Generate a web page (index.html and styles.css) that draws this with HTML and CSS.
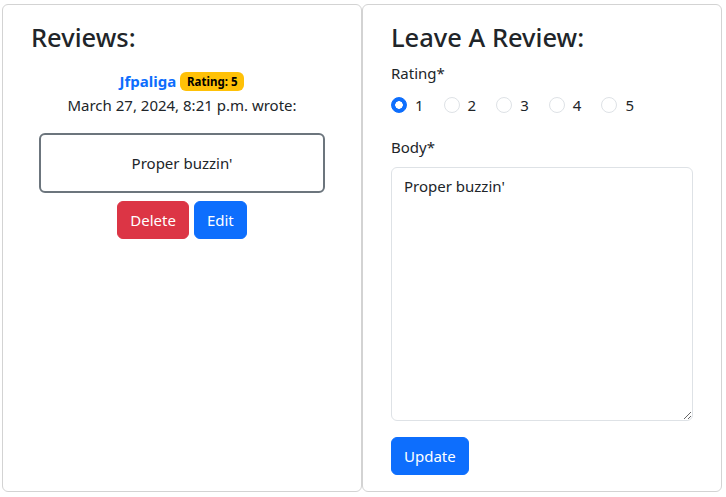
FILE: index.html
```html
<!DOCTYPE html>
<html lang="en">
<head>
<meta charset="utf-8">
<title>Reviews</title>
<link rel="stylesheet" href="styles.css">
</head>
<body>
<div class="layout">
  <section class="card">
    <h2 class="title">Reviews:</h2>
    <div class="review">
      <div class="review-head">
        <a class="author" href="#">Jfpaliga</a> <span class="badge">Rating: 5</span>
      </div>
      <div class="review-date">March 27, 2024, 8:21 p.m. wrote:</div>
      <div class="review-body">Proper buzzin'</div>
      <div class="review-actions">
        <button class="btn btn-danger" type="button">Delete</button>
        <button class="btn btn-primary" type="button">Edit</button>
      </div>
    </div>
  </section>
  <section class="card">
    <h2 class="title">Leave A Review:</h2>
    <form class="form">
      <div class="field">
        <div class="label">Rating*</div>
        <div class="radios">
          <label class="radio"><input type="radio" name="rating" checked><span>1</span></label>
          <label class="radio"><input type="radio" name="rating"><span>2</span></label>
          <label class="radio"><input type="radio" name="rating"><span>3</span></label>
          <label class="radio"><input type="radio" name="rating"><span>4</span></label>
          <label class="radio"><input type="radio" name="rating"><span>5</span></label>
        </div>
      </div>
      <div class="field field-body">
        <label class="label" for="body">Body*</label>
        <textarea id="body" class="textarea">Proper buzzin'</textarea>
      </div>
      <div>
        <button class="btn btn-primary" type="button">Update</button>
      </div>
    </form>
  </section>
</div>
</body>
</html>
```
FILE: styles.css
```css
* { box-sizing: border-box; }
html, body { margin: 0; padding: 0; background: #fff; }
body {
  font-family: "Noto Sans", "Liberation Sans", sans-serif;
  font-size: 15px;
  line-height: 24px;
  color: #212529;
}
.layout {
  display: grid;
  grid-template-columns: 360px 360px;
  height: 488px;
  margin: 4px 0 0 2px;
}
.card {
  border: 1px solid #d3d3d3;
  border-radius: 6px;
  padding: 16px 28px;
  display: flex;
  flex-direction: column;
}
.title {
  margin: 0 0 6px;
  font-size: 25.5px;
  font-weight: 500;
  line-height: 33.6px;
}
.review {
  display: flex;
  flex-direction: column;
  align-items: center;
  text-align: center;
  margin-top: 8px;
}
.review-head { line-height: 24px; }
.author {
  color: #0d6efd;
  font-weight: 700;
  text-decoration: none;
}
.badge {
  display: inline-block;
  background: #ffc107;
  color: #000;
  font-size: 11.5px;
  font-weight: 700;
  line-height: 1;
  padding: 4px 7px;
  border-radius: 6px;
  vertical-align: 1px;
}
.review-date { line-height: 24px; }
.review-body {
  align-self: stretch;
  margin: 16px 8px 0;
  height: 60px;
  border: 2px solid #6c757d;
  border-radius: 6px;
  display: flex;
  align-items: center;
  justify-content: center;
}
.review-actions {
  display: flex;
  gap: 5px;
  margin-top: 8px;
}
.btn {
  font-family: inherit;
  font-size: 15px;
  line-height: 24px;
  padding: 6px 12px;
  border: 1px solid transparent;
  border-radius: 6px;
  color: #fff;
  cursor: pointer;
}
.btn-danger { background: #dc3545; border-color: #dc3545; }
.btn-primary { background: #0d6efd; border-color: #0d6efd; }
.form { display: flex; flex-direction: column; }
.label { display: block; line-height: 24px; margin-bottom: 8px; }
.field { margin-bottom: 18px; }
.field-body { margin-bottom: 16px; }
.radios { display: flex; }
.radio {
  display: inline-flex;
  align-items: center;
  margin-right: 20px;
  line-height: 24px;
}
.radio input {
  appearance: none;
  -webkit-appearance: none;
  width: 16px;
  height: 16px;
  margin: 0 8px 0 0;
  border: 1px solid #dee2e6;
  border-radius: 50%;
  background: #fff;
}
.radio input:checked {
  border-color: #0d6efd;
  background: radial-gradient(circle, #fff 0 3.5px, #0d6efd 4px);
}
.textarea {
  display: block;
  width: 100%;
  height: 254px;
  padding: 6px 12px;
  font-family: inherit;
  font-size: 15px;
  line-height: 24px;
  color: #212529;
  border: 1px solid #dee2e6;
  border-radius: 6px;
  resize: vertical;
}
```
